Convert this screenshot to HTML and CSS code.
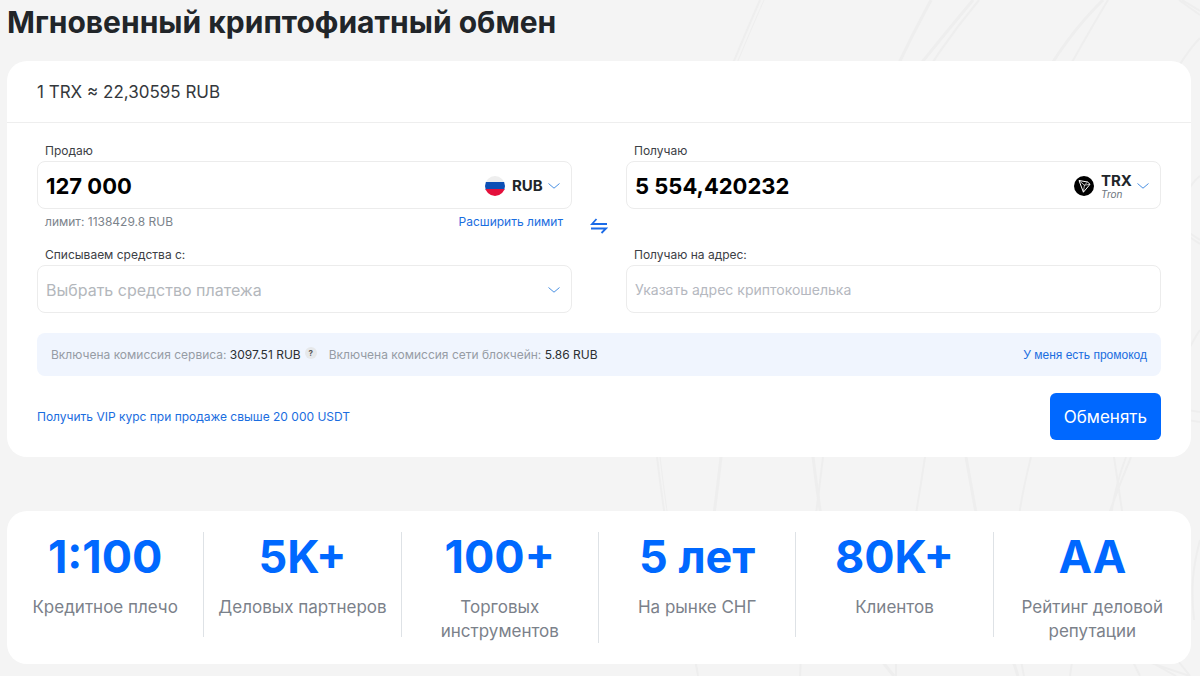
FILE: index.html
```html
<!DOCTYPE html>
<html lang="ru">
<head>
    <meta charset="utf-8">
    <meta name="viewport" content="width=device-width, initial-scale=1">
    <title>Мгновенный криптофиатный обмен</title>
    <link rel="stylesheet" href="styles.css">
</head>
<body>
<!-- Decorative lines behind the cards -->
<svg class="bg-lines" viewBox="0 0 600 676" width="600" height="676" fill="none" stroke="#eeeeee" stroke-width="2" aria-hidden="true">
    <path d="M160 0C90 160 38 300 57 457S88 610 98 676"/>
    <path d="M164 0C94 160 41 300 60 457S88 610 98 676" stroke-width="1"/>
    <path d="M331 0C250 150 195 310 213 457S240 610 294 676" stroke-width="3"/>
    <path d="M373 0C240 160 140 290 121 457S98 580 90 660" stroke-width="3"/>
    <path d="M379 0C246 160 243 290 223 457S205 580 200 676"/>
    <path d="M503 0C400 100 340 310 366 457S390 590 418 676" stroke-width="3"/>
    <path d="M508 0C430 130 350 290 325 457S296 590 296 676"/>
    <path d="M431 457C415 520 405 590 424 676"/>
    <path d="M579 0L600 15M582 0L600 11M600 38C540 100 490 300 514 457S530 600 590 676"/>
    <path d="M531 457C500 530 480 600 470 676M526 457C502 520 500 600 540 676"/>
    <path d="M600 176C594 180 591 186 588 190M588 232L600 240M588 236L600 244M600 330C596 335 592 344 588 350M588 410L600 412M588 420L600 422"/>
    <path d="M600 540C592 570 591 590 594 620M530 656L590 676M540 656L576 676"/>
</svg>

<main class="page">
    <h1>Мгновенный криптофиатный обмен</h1>

    <form class="card exchange">
        <div class="rate">1 TRX ≈ 22,30595 RUB</div>

        <div class="exchange-body">
            <div class="columns">
                <div class="column">
                    <label class="field-label" for="sellAmount">Продаю</label>
                    <div class="field">
                        <input class="amount" type="text" id="sellAmount" value="127 000">
                        <div class="currency">
                            <svg class="coin" width="20" height="20" viewBox="0 0 20 20">
                                <clipPath id="round"><circle cx="10" cy="10" r="10"/></clipPath>
                                <g clip-path="url(#round)">
                                    <path fill="#eee" d="M0 0h20v7H0z"/>
                                    <path fill="#0c4fb5" d="M0 6h20v8H0z"/>
                                    <path fill="#e4103b" d="M0 13h20v7H0z"/>
                                </g>
                            </svg>
                            <select class="currency-select" aria-label="Валюта продажи">
                                <option>RUB</option>
                            </select>
                            <svg class="chevron" width="12" height="6" viewBox="0 0 12 6"><path d="M0.5 0.5L6 5.2L11.5 0.5"/></svg>
                        </div>
                    </div>
                    <div class="hint">
                        <span>лимит: 1138429.8 RUB</span>
                        <a href="#">Расширить лимит</a>
                    </div>
                    <label class="field-label" for="payMethod">Списываем средства с:</label>
                    <div class="field">
                        <select class="method" id="payMethod">
                            <option>Выбрать средство платежа</option>
                        </select>
                        <svg class="chevron" width="12" height="6" viewBox="0 0 12 6"><path d="M0.5 0.5L6 5.2L11.5 0.5"/></svg>
                    </div>
                </div>

                <button class="swap" type="button" aria-label="Поменять местами">
                    <svg width="18" height="16" viewBox="0 0 18 16" fill="none" stroke="#1a6be8" stroke-width="1.800">
                        <path d="M17 6H2L6.500 1"/>
                        <path d="M1 10.500H16L11.500 15"/>
                    </svg>
                </button>

                <div class="column">
                    <label class="field-label" for="buyAmount">Получаю</label>
                    <div class="field">
                        <input class="amount" type="text" id="buyAmount" value="5 554,420232">
                        <div class="currency">
                            <svg class="coin" width="20" height="20" viewBox="0 0 20 20" fill="none" stroke="#fff" stroke-linejoin="round">
                                <circle cx="10" cy="10" r="10" fill="#000" stroke="none"/>
                                <path stroke-width="1" d="M5 4.500L13.600 6L16 8.300L9.400 16.200Z"/>
                                <path stroke-width="0.700" d="M5 4.500L10.400 9.200L9.400 16.200M10.400 9.200L13.600 6M10.400 9.200L16 8.300"/>
                            </svg>
                            <div class="currency-name">
                                <select class="currency-select" aria-label="Валюта покупки">
                                    <option>TRX</option>
                                </select>
                                <small>Tron</small>
                            </div>
                            <svg class="chevron" width="12" height="6" viewBox="0 0 12 6"><path d="M0.5 0.5L6 5.2L11.5 0.5"/></svg>
                        </div>
                    </div>
                    <div class="hint"></div>
                    <label class="field-label" for="wallet">Получаю на адрес:</label>
                    <div class="field">
                        <input class="wallet" type="text" id="wallet" placeholder="Указать адрес криптокошелька">
                    </div>
                </div>
            </div>

            <div class="fees">
                <span>Включена комиссия сервиса: <b>3097.51 RUB</b></span>
                <span class="help">?</span>
                <span>Включена комиссия сети блокчейн: <b>5.86 RUB</b></span>
                <button class="promo" type="button">У меня есть промокод</button>
            </div>

            <div class="actions">
                <a href="#">Получить VIP курс при продаже свыше 20 000 USDT</a>
                <button class="submit" type="submit">Обменять</button>
            </div>
        </div>
    </form>

    <section class="card stats">
        <div class="stat"><strong>1:100</strong><p>Кредитное плечо</p></div>
        <div class="stat"><strong>5K+</strong><p>Деловых партнеров</p></div>
        <div class="stat"><strong>100+</strong><p>Торговых инструментов</p></div>
        <div class="stat"><strong>5 лет</strong><p>На рынке СНГ</p></div>
        <div class="stat"><strong>80K+</strong><p>Клиентов</p></div>
        <div class="stat"><strong>AA</strong><p>Рейтинг деловой репутации</p></div>
    </section>
</main>
</body>
</html>
```
FILE: styles.css
```css
* { box-sizing: border-box; }
body {
    margin: 0;
    position: relative;
    overflow-x: hidden;
    background: #f4f4f4;
    color: #212529;
    font-family: Inter, "Liberation Sans", sans-serif;
    font-size: 12px;
    line-height: 20px;
}
a {
    color: #1a6de0;
    text-decoration: none;
}
a:hover { text-decoration: underline; }
button, input, select {
    margin: 0;
    padding: 0;
    border: none;
    background: transparent;
    font-family: inherit;
    color: inherit;
}
button, select { cursor: pointer; }
select { appearance: none; }
.bg-lines {
    position: absolute;
    top: 0;
    right: 0;
    z-index: -1;
}
.page { padding: 2px 9px 12px 7px; }
h1 {
    margin: 0 0 19px;
    font-size: 30px;
    line-height: 40px;
    font-weight: 700;
}
.card {
    background: #fff;
    border-radius: 20px;
}

/* Exchange form */
.rate {
    padding: 21px 30px 19px;
    border-bottom: 1px solid #eee;
    font-size: 17px;
    line-height: 21px;
    color: #34383c;
}
.exchange-body { padding: 18px 30px 17px; }
.columns {
    display: flex;
    align-items: center;
}
.column {
    flex: 1;
    min-width: 0;
}
.field-label {
    display: block;
    padding: 0 8px;
    color: #3c4045;
}
.field {
    display: flex;
    align-items: center;
    height: 48px;
    padding: 1px 11px 0 8px;
    border: 1px solid #ececec;
    border-radius: 8px;
}
.field:focus-within { border-color: #1a6de0; }
.field input, .method {
    flex: 1;
    min-width: 0;
    height: 100%;
    outline: none;
}
.amount {
    color: #000;
    font-size: 22px;
    font-weight: 700;
}
.wallet { font-size: 14px; }
.wallet::placeholder { color: #b5b8c0; }
.method {
    font-size: 16px;
    color: #b3b7bc;
}
.currency {
    display: flex;
    align-items: center;
}
.coin { margin-right: 7px; }
.currency-select {
    display: block;
    font-size: 15px;
    line-height: 16px;
    font-weight: 700;
}
.currency-name small {
    display: block;
    font-size: 10px;
    line-height: 10px;
    font-style: italic;
    color: #6c757d;
}
.chevron {
    margin-left: 5px;
    fill: none;
    stroke: #4a90e2;
}
.hint {
    display: flex;
    justify-content: space-between;
    height: 36px;
    padding: 3px 9px 0 8px;
    color: #7b838b;
}
.swap {
    display: flex;
    justify-content: center;
    width: 54px;
    margin-top: -2px;
}
.fees {
    display: flex;
    align-items: center;
    margin-top: 20px;
    padding: 12px 14px 11px;
    border-radius: 8px;
    background: #f0f5fe;
    color: #969ca5;
}
.fees b {
    font-weight: 400;
    color: #2b2f33;
}
.help {
    width: 12px;
    height: 12px;
    margin: 0 12px 4px 4px;
    border-radius: 50%;
    background: #e6e8ea;
    color: #555;
    font-size: 8px;
    line-height: 12px;
    font-weight: 700;
    text-align: center;
}
.promo {
    margin-left: auto;
    font-family: "Liberation Sans", Arial, sans-serif;
    font-size: 12px;
    color: #1a6de0;
}
.actions {
    display: flex;
    align-items: center;
    justify-content: space-between;
    margin-top: 17px;
}
.submit {
    height: 47px;
    padding: 0 14px;
    border-radius: 6px;
    background: #0068ff;
    color: #fff;
    font-size: 17px;
}
.submit:hover { background: #0058dc; }

/* Numbers */
.stats {
    display: grid;
    grid-template-columns: repeat(6, 1fr);
    align-items: start;
    margin-top: 54px;
    padding: 21px 0;
}
.stat {
    min-height: 105px;
    padding: 0 14px;
    border-right: 1px solid #dee2e6;
    text-align: center;
}
.stat:last-child { border-right: none; }
.stat strong {
    display: block;
    margin-bottom: 13px;
    color: #0068ff;
    font-size: 45px;
    line-height: 50px;
    font-weight: 700;
}
.stat p {
    margin: 0;
    color: #7b818a;
    font-size: 17px;
    line-height: 24px;
}
```
